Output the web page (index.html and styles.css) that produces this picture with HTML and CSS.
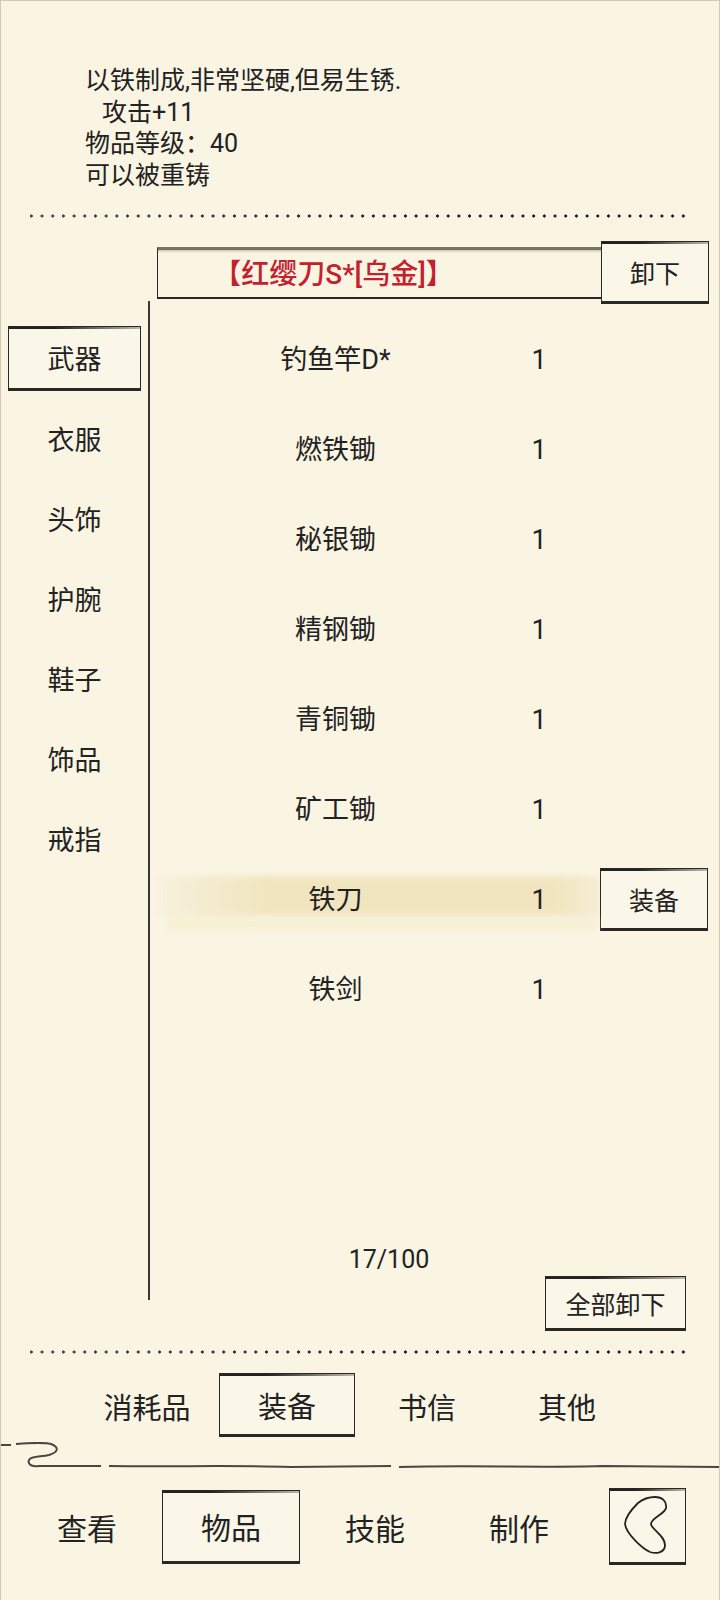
FILE: index.html
```html
<!DOCTYPE html>
<html lang="zh">
<head>
    <meta charset="UTF-8">
    <meta name="viewport" content="width=device-width, initial-scale=1.0">
    <title>物品</title>
    <link rel="stylesheet" href="styles.css">
</head>
<body>
    <div class="page">
        <section class="desc">
            <p>以铁制成,非常坚硬,但易生锈.</p>
            <p class="indent">攻击+11</p>
            <p>物品等级：40</p>
            <p>可以被重铸</p>
        </section>
        <div class="dots dots-top"></div>

        <section class="equipped">
            <div class="equipped-name">【红缨刀S*[乌金]】</div>
            <button class="ink-box equipped-btn">卸下</button>
        </section>

        <section class="content">
            <nav class="side">
                <div class="side-item ink-box">武器</div>
                <div class="side-item">衣服</div>
                <div class="side-item">头饰</div>
                <div class="side-item">护腕</div>
                <div class="side-item">鞋子</div>
                <div class="side-item">饰品</div>
                <div class="side-item">戒指</div>
            </nav>
            <div class="list">
                <div class="row"><span class="row-name">钓鱼竿D*</span><span class="row-count">1</span></div>
                <div class="row"><span class="row-name">燃铁锄</span><span class="row-count">1</span></div>
                <div class="row"><span class="row-name">秘银锄</span><span class="row-count">1</span></div>
                <div class="row"><span class="row-name">精钢锄</span><span class="row-count">1</span></div>
                <div class="row"><span class="row-name">青铜锄</span><span class="row-count">1</span></div>
                <div class="row"><span class="row-name">矿工锄</span><span class="row-count">1</span></div>
                <div class="row row-active">
                    <span class="row-name">铁刀</span><span class="row-count">1</span>
                    <button class="ink-box row-btn">装备</button>
                </div>
                <div class="row"><span class="row-name">铁剑</span><span class="row-count">1</span></div>
                <div class="capacity">17/100</div>
                <button class="ink-box unequip-all">全部卸下</button>
            </div>
        </section>

        <div class="dots dots-bottom"></div>

        <div class="tabs">
            <div class="tab">消耗品</div>
            <div class="tab ink-box">装备</div>
            <div class="tab">书信</div>
            <div class="tab">其他</div>
        </div>

        <svg class="cloud-line" width="720" height="27" viewBox="0 0 720 27">
            <path d="M0 3 L10 3 M15 2 C28 1 42 0 50 2 C58 5 58 10 48 13 C40 15 30 14 28 18 C26 23 32 25 38 24 L100 24 M108 24 C170 25 230 23 290 25 L390 24 M398 25 C470 23 540 26 600 24 C640 24 680 25 720 25" fill="none" stroke="#4a463c" stroke-width="2"/>
        </svg>

        <div class="nav">
            <div class="nav-item">查看</div>
            <div class="nav-item ink-box">物品</div>
            <div class="nav-item">技能</div>
            <div class="nav-item">制作</div>
            <div class="nav-icon ink-box">
                <svg width="75" height="73" viewBox="0 0 75 73">
                    <path d="M45 8 C52 8 57 12 56 19 C55 25 41 29 41 35 C41 40 56 47 55 57 C54 64 46 65 40 63 C33 60 16 45 15 35 C15 27 23 19 28 14 C33 10 39 8 45 8 Z" fill="none" stroke="#222" stroke-width="1.8"/>
                </svg>
            </div>
        </div>
    </div>
</body>
</html>
```

FILE: styles.css
```css
* {
    box-sizing: border-box;
}
body {
    margin: 0;
    background-color: #faf5e3;
}
button {
    font: inherit;
    color: inherit;
    padding: 0;
}
.page {
    width: 720px;
    height: 1600px;
    display: flex;
    flex-direction: column;
    overflow: hidden;
    background-color: #faf5e3;
    border: 1px solid #cfcab4;
    border-bottom: 0;
    color: #222;
    font-family: Roboto, "Noto Sans CJK SC", sans-serif;
    font-size: 27px;
}
.ink-box {
    border: 1px solid #2a2825;
    border-bottom-width: 3px;
    background-color: #fbf7e8;
    background-image: linear-gradient(to right, #222 0%, #222 35%, rgba(34, 34, 34, 0.3) 100%);
    background-size: 100% 2px;
    background-repeat: no-repeat;
}

.desc {
    padding: 64px 0 0 84px;
    font-size: 25px;
    line-height: 31.5px;
}
.desc p {
    margin: 0;
}
.desc .indent {
    padding-left: 17px;
}

.dots {
    height: 4px;
    margin: 0 29px 0 25px;
    background-image: radial-gradient(circle at 50% 50%, #222 1.4px, transparent 1.8px);
    background-size: 10.7px 4px;
    -webkit-mask-image: linear-gradient(to right, rgba(0, 0, 0, 0.8), #000 60%);
    mask-image: linear-gradient(to right, rgba(0, 0, 0, 0.8), #000 60%);
}
.dots-top {
    margin-top: 23px;
}
.dots-bottom {
    margin-top: 19px;
}

.equipped {
    display: flex;
    height: 60px;
    margin-top: 23px;
    padding-left: 156px;
}
.equipped-name {
    width: 444px;
    height: 52px;
    margin-top: 6px;
    padding-right: 92px;
    text-align: center;
    line-height: 50px;
    font-size: 28px;
    font-weight: 500;
    color: #c5202e;
    border-left: 1px solid #2a2825;
    border-bottom: 2px solid #2a2825;
    border-top: 3px solid #77735f;
    box-shadow: inset 0 3px 3px -2px #bdb8a0;
}
.equipped-btn {
    width: 108px;
    height: 63px;
    font-size: 25px;
}

.content {
    display: flex;
    height: 1030px;
}
.side {
    flex: none;
    display: flex;
    flex-direction: column;
    gap: 15px;
    width: 149px;
    height: 999px;
    padding: 25px 0 0 7px;
    border-right: 2px solid #3a3835;
}
.side-item,
.tab,
.nav-item {
    display: flex;
    align-items: center;
    justify-content: center;
}
.side-item {
    width: 133px;
    height: 65px;
    flex: none;
}
.list {
    flex: 1;
    display: flex;
    flex-direction: column;
    padding: 11px 0 0 7px;
}
.row {
    position: relative;
    display: grid;
    grid-template-columns: 357px 50px 1fr;
    align-items: center;
    height: 90px;
    flex: none;
}
.row-name,
.row-count {
    position: relative;
    text-align: center;
}
.row-count {
    padding-top: 6px;
}
.row-active::before {
    content: "";
    position: absolute;
    left: 0;
    top: 24px;
    width: 443px;
    height: 40px;
    background: linear-gradient(to right, rgba(240, 228, 190, 0.15) 0%, rgba(240, 228, 190, 0.6) 12%, #f1e5bf 25%, #f1e5bf 90%, rgba(240, 228, 190, 0.4) 100%);
    filter: blur(3px);
}
.row-active::after {
    content: "";
    position: absolute;
    left: 10px;
    top: 66px;
    width: 430px;
    height: 12px;
    background-color: #f6efd3;
    filter: blur(3px);
}
.row-btn {
    position: relative;
    justify-self: end;
    width: 108px;
    height: 63px;
    margin: 5px 11px 0 0;
    font-size: 25px;
}
.capacity {
    width: 464px;
    margin-top: auto;
    margin-bottom: 1px;
    height: 32px;
    padding-top: 2px;
    line-height: 30px;
    text-align: center;
    font-size: 25px;
}
.unequip-all {
    align-self: flex-end;
    width: 141px;
    height: 55px;
    flex: none;
    margin-right: 33px;
    font-size: 25px;
}

.tabs {
    display: grid;
    grid-template-columns: repeat(4, 136px);
    gap: 4px;
    height: 64px;
    margin-top: 19px;
    padding-left: 78px;
}
.tab {
    font-size: 29px;
    padding-top: 2px;
}
.cloud-line {
    display: block;
    flex: none;
    margin-top: 5px;
}
.nav {
    display: grid;
    grid-template-columns: repeat(4, 138px) 77px;
    column-gap: 6px;
    height: 77px;
    margin-top: 19px;
    padding-left: 17px;
    align-items: center;
}
.nav-item {
    height: 74px;
    font-size: 30px;
}
.nav-icon {
    width: 77px;
    height: 77px;
    margin-left: 15px;
}
```
